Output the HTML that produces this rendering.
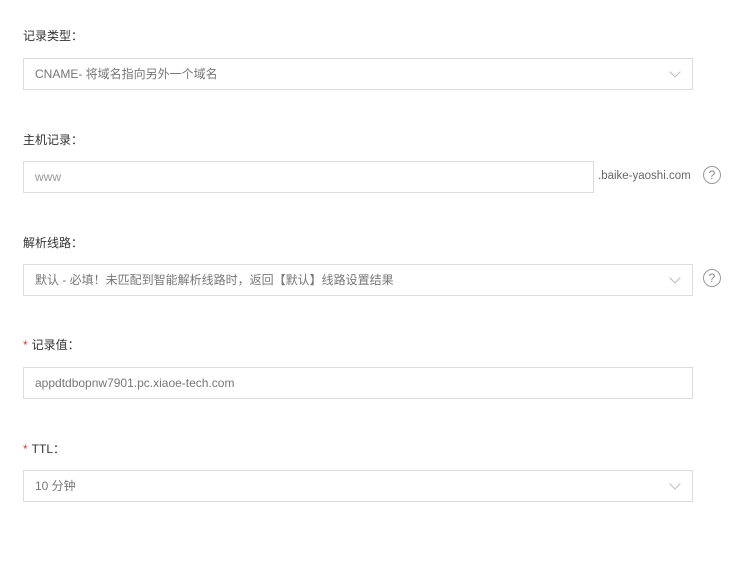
<!DOCTYPE html>
<html><head><meta charset="utf-8"><style>
body{margin:0;width:750px;height:568px;background:#fff;font-family:"Liberation Sans","Noto Sans CJK SC",sans-serif;font-size:12px;color:#333;position:relative;overflow:hidden}
.l{position:absolute;left:23px;font-size:12px;color:#333}
.l b{color:#e33;font-weight:normal;margin-right:4px}
.box{position:absolute;left:23px;width:668px;height:30px;border:1px solid #dcdcdc;box-sizing:content-box;line-height:30px;padding:0;}
.box span{position:absolute;left:11px;color:#777}
.arr{position:absolute;right:13px;top:9px;width:7px;height:7px;border-right:1px solid #bbb;border-bottom:1px solid #bbb;transform:rotate(45deg)}
.q{position:absolute;left:703px;width:16px;height:16px;border:1px solid #999;border-radius:50%;text-align:center;line-height:16px;font-size:12px;color:#888}
</style></head><body>
<div class="l" style="top:27px">记录类型：</div>
<div class="box" style="top:58px"><span>CNAME- 将域名指向另外一个域名</span><div class="arr"></div></div>
<div class="l" style="top:131px">主机记录：</div>
<div class="box" style="top:161px;width:569px"><span style="color:#999">www</span></div>
<div style="position:absolute;left:598px;top:170px;color:#666;font-size:11.5px">.baike-yaoshi.com</div>
<div class="q" style="top:166px">?</div>
<div class="l" style="top:234px">解析线路：</div>
<div class="box" style="top:264px"><span>默认 - 必填！未匹配到智能解析线路时，返回【默认】线路设置结果</span><div class="arr"></div></div>
<div class="q" style="top:269px">?</div>
<div class="l" style="top:336px"><b>*</b>记录值：</div>
<div class="box" style="top:367px"><span>appdtdbopnw7901.pc.xiaoe-tech.com</span></div>
<div class="l" style="top:440px"><b>*</b>TTL：</div>
<div class="box" style="top:470px"><span>10 分钟</span><div class="arr"></div></div>
</body></html>
